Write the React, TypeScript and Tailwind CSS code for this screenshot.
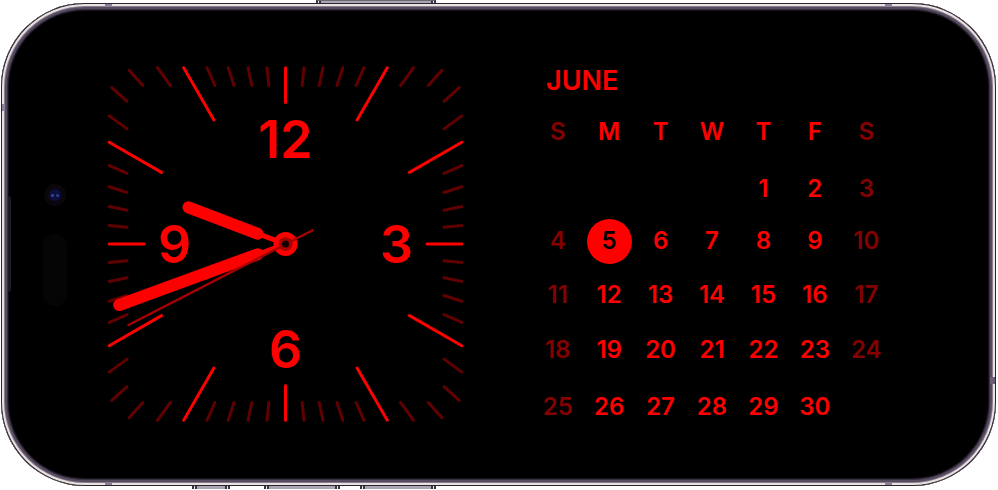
import React from 'react';

type Point = [number, number];

const rad = (deg: number) => (deg * Math.PI) / 180;

// Point where a ray at the given clock angle meets a square of half-size `half`.
const onSquare = (deg: number, half: number): Point => {
  const s = Math.sin(rad(deg));
  const c = Math.cos(rad(deg));
  const k = half / Math.max(Math.abs(s), Math.abs(c));
  return [s * k, -c * k];
};

const ticks = Array.from({ length: 60 }, (_, i) => {
  const major = i % 5 === 0;
  const nearCorner = [7, 8].includes(i % 15);
  const outer = nearCorner ? 173.7 : 176.3;
  const inner = major ? (i % 15 === 0 ? 141.5 : 124) : 158.5;
  return { i, major, from: onSquare(i * 6, outer), to: onSquare(i * 6, inner) };
});

const numerals: { label: string; x: number; y: number }[] = [
  { label: '12', x: 0, y: -86 },
  { label: '3', x: 111, y: 19 },
  { label: '6', x: 0, y: 124 },
  { label: '9', x: -111, y: 19 },
];

function Clock() {
  return (
    <svg
      role="img"
      aria-label="Clock"
      viewBox="-178.5 -178 357 356"
      className="h-[356px] w-[357px] shrink-0"
      strokeLinecap="round"
    >
      {ticks.map((t) => (
        <line
          key={t.i}
          x1={t.from[0]}
          y1={t.from[1]}
          x2={t.to[0]}
          y2={t.to[1]}
          strokeWidth={3}
          stroke={t.major ? '#ff0000' : '#600000'}
        />
      ))}
      {numerals.map((n) => (
        <text
          key={n.label}
          x={n.x}
          y={n.y}
          textAnchor="middle"
          className="fill-[#ff0000] text-[52px] font-semibold"
        >
          {n.label}
        </text>
      ))}
      <g stroke="#ff0000">
        <line x1="0" y1="0" x2="-28" y2="-10.3" strokeWidth="5" />
        <line x1="-28" y1="-10.3" x2="-97" y2="-36.7" strokeWidth="12" />
        <line x1="0" y1="0" x2="-28" y2="10.3" strokeWidth="5" />
        <line x1="-28" y1="10.3" x2="-166.3" y2="61" strokeWidth="12" />
      </g>
      <circle r="12" fill="#ff0000" />
      <line x1="-157" y1="81" x2="27" y2="-13.7" stroke="#a80000" strokeWidth="2.4" />
      <circle r="7" fill="#a80000" />
      <circle r="3.5" fill="#120000" />
    </svg>
  );
}

const weekdays = ['S', 'M', 'T', 'W', 'T', 'F', 'S'];
const dayNames = ['Sunday', 'Monday', 'Tuesday', 'Wednesday', 'Thursday', 'Friday', 'Saturday'];
const today = 5;

const weeks: { height: string; days: (number | null)[] }[] = [
  { height: 'h-[55px]', days: [null, null, null, null, 1, 2, 3] },
  { height: 'h-[50px]', days: [4, 5, 6, 7, 8, 9, 10] },
  { height: 'h-[57px]', days: [11, 12, 13, 14, 15, 16, 17] },
  { height: 'h-[54px]', days: [18, 19, 20, 21, 22, 23, 24] },
  { height: 'h-[60px]', days: [25, 26, 27, 28, 29, 30, null] },
];

const tone = (col: number) => (col === 0 || col === 6 ? 'text-[#850000]' : 'text-[#ff0000]');

function Calendar() {
  return (
    <section className="w-[360px] shrink-0">
      <h1 id="month" className="pb-[7px] pl-3.5 text-[27px] leading-[30px] font-semibold text-[#ff0000]">
        JUNE
      </h1>
      <table
        aria-labelledby="month"
        className="w-full table-fixed border-collapse text-center text-2xl leading-6 font-semibold"
      >
        <thead>
          <tr className="h-[58px]">
            {weekdays.map((d, i) => (
              <th key={dayNames[i]} scope="col" abbr={dayNames[i]} className={`p-0 font-semibold ${tone(i)}`}>
                {d}
              </th>
            ))}
          </tr>
        </thead>
        <tbody>
          {weeks.map((week, w) => (
            <tr key={w} className={week.height}>
              {week.days.map((day, i) => (
                <td key={i} className={`p-0 ${tone(i)}`}>
                  {day === today ? (
                    <span className="mx-auto flex size-[45px] items-center justify-center rounded-full bg-[#ff0000] text-black">
                      {day}
                    </span>
                  ) : (
                    day
                  )}
                </td>
              ))}
            </tr>
          ))}
        </tbody>
      </table>
    </section>
  );
}

function Sensors() {
  return (
    <div className="flex w-[26px] shrink-0 flex-col items-center gap-7 pt-[118px]">
      <div className="flex size-[22px] items-center justify-center rounded-full bg-[#0b060c]">
        <div className="flex size-3 items-center justify-center gap-0.5 rounded-full bg-[#0d0f3c]">
          <span className="size-[3px] rounded-full bg-[#3b40b0]" />
          <span className="size-[3px] rounded-full bg-[#1d4a8c]" />
        </div>
      </div>
      <div className="h-[72px] w-6 rounded-full bg-[#050505]" />
    </div>
  );
}

const buttonClass =
  'h-[3px] border-x-2 border-[#3a3240] bg-[#aaa5b0] shadow-[inset_1px_0_#efeaf0,inset_-1px_0_#efeaf0,inset_3px_0_#3a3240,inset_-3px_0_#3a3240]';

// Antenna bands and the earpiece, which lie on top of the metal rim.
function RimDetails() {
  return (
    <div aria-hidden="true">
      <span className="absolute top-px left-[104px] h-[3px] w-[7px] bg-[#8b8298]" />
      <span className="absolute top-px right-[104px] h-[3px] w-[7px] bg-[#8b8298]" />
      <span className="absolute bottom-px left-[104px] h-[3px] w-[7px] bg-[#8b7c94]" />
      <span className="absolute right-[104px] bottom-px h-[3px] w-[7px] bg-[#8b7c94]" />
      <span className="absolute top-[101px] left-px h-[7px] w-[3px] bg-[#8b8298]" />
      <span className="absolute right-px bottom-[102px] h-[7px] w-[5px] bg-[#6b5f78]" />
      <span className="absolute top-[193px] left-[7px] h-24 w-[3px] rounded-r bg-[#1c1c1e]" />
    </div>
  );
}

export default function App() {
  return (
    <main className="bg-white pr-0.5 pl-px font-[Inter,'Liberation_Sans',sans-serif]">
      <div aria-hidden="true" className="flex pl-[315px]">
        <span className={`${buttonClass} w-[120px] border-t border-t-[#6b6472]`} />
      </div>
      <div className="relative rounded-[84px] bg-black pt-[63px] pr-[104px] pb-[49px] pl-[41px] shadow-[inset_0_0_0_1px_#2b2431,inset_0_0_0_3px_#e9e2e0,inset_0_0_0_4px_#867d8d,inset_0_0_0_6px_#574b61,inset_0_0_0_7px_#373040,inset_0_0_0_8px_#15121a]">
        <RimDetails />
        <div className="flex items-start gap-[39px]">
          <Sensors />
          <div className="flex grow items-start justify-between">
            <Clock />
            <Calendar />
          </div>
        </div>
      </div>
      <div aria-hidden="true" className="flex pl-[191px]">
        <span className={`${buttonClass} mr-[34px] w-[38px]`} />
        <span className={`${buttonClass} mr-[20px] w-[76px]`} />
        <span className={`${buttonClass} w-[76px]`} />
      </div>
    </main>
  );
}
